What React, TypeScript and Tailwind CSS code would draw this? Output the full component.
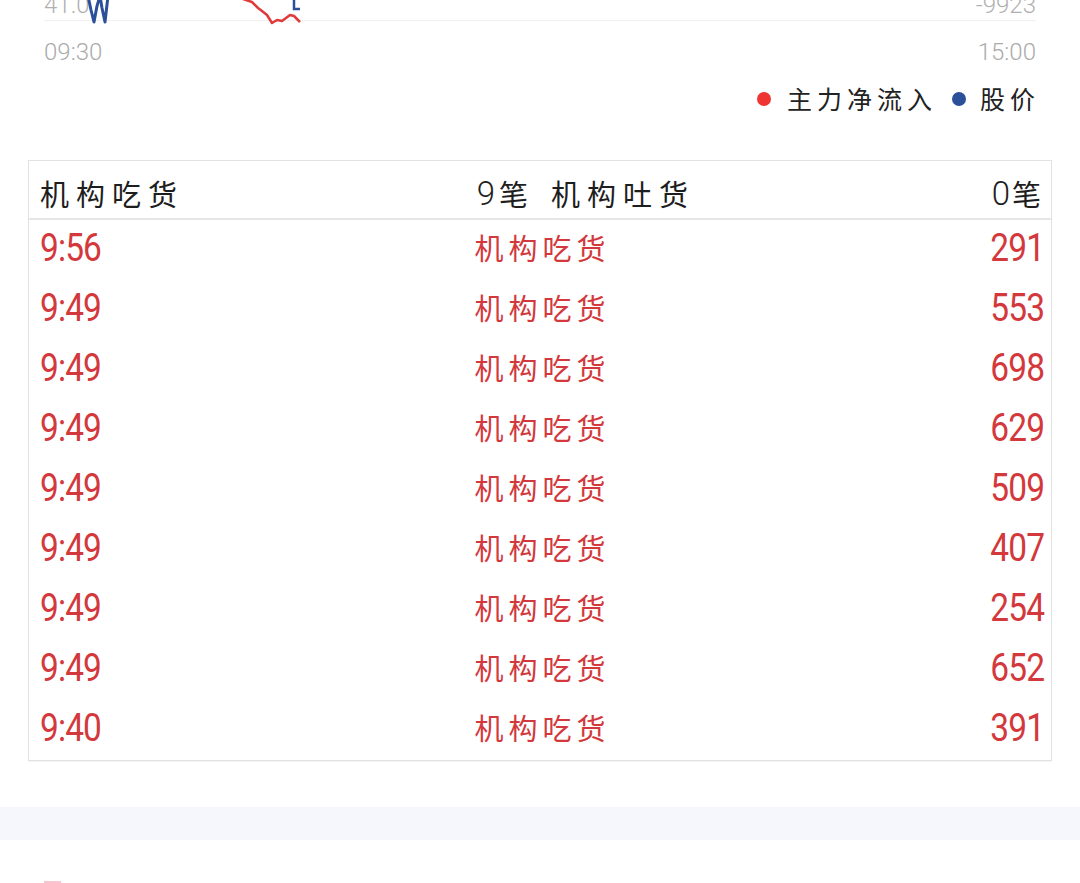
import React from "react";

const rows = [
  ["9:56", "291"],
  ["9:49", "553"],
  ["9:49", "698"],
  ["9:49", "629"],
  ["9:49", "509"],
  ["9:49", "407"],
  ["9:49", "254"],
  ["9:49", "652"],
  ["9:40", "391"],
];

const cjk = { fontFamily: '"Noto Sans CJK SC", "Noto Sans", sans-serif' };
const num = { fontFamily: 'Roboto, "Noto Sans CJK SC", sans-serif' };

export default function App() {
  return (
    <div className="w-[1080px] h-[883px] overflow-hidden bg-white relative">
      {/* chart tail */}
      <div className="relative mx-[44px] h-[21px] border-b border-[#f1f1f1]">
        <div className="flex justify-between -translate-y-[5px] text-[24px] leading-[20px] text-[#b0b0b0] font-light" style={num}>
          <span>41.0</span>
          <span>-9923</span>
        </div>
        <svg className="absolute left-0 top-0" width="992" height="26" viewBox="0 0 992 26">
          <polyline
            points="44,-4 47,10 50,22 53,6 56,-4 58,8 61,22 64,-4"
            fill="none"
            stroke="#2c4f9a"
            strokeWidth="3"
            strokeLinejoin="round"
          />
          <polyline
            points="196,-2 208,2 214,8 218,11 223,15 228,23 233,20 238,21 242,18 246,15 250,16 253,19 256,22"
            fill="none"
            stroke="#df3b3b"
            strokeWidth="2.5"
            strokeLinejoin="round"
          />
          <polyline points="250,-2 250,9 256,9" fill="none" stroke="#2c4f9a" strokeWidth="2.5" />
        </svg>
      </div>
      <div
        className="mx-[44px] mt-[19px] flex justify-between text-[24px] leading-[24px] text-[#ababab] font-light"
        style={num}
      >
        <span>09:30</span>
        <span>15:00</span>
      </div>
      {/* legend */}
      <div className="mt-[22px] pr-[40px] flex justify-end items-center h-[26px] text-[25px] text-[#222] tracking-[5px]" style={cjk}>
        <span className="w-[14px] h-[14px] rounded-full bg-[#ef3434] mr-[16px]" />
        <span>主力净流入</span>
        <span className="w-[14px] h-[14px] rounded-full bg-[#2c4f9a] ml-[15px] mr-[14px]" />
        <span>股价</span>
      </div>
      {/* table */}
      <div className="mt-[48px] mx-[28px] w-[1024px] border border-[#e2e2e2] shadow-[0_1px_1px_rgba(0,0,0,0.04)]">
        <div className="flex h-[59px] pt-[9px] border-b-2 border-[#e6e6e6] text-[29px] text-[#1e1e1e]" style={cjk}>
          <div className="w-1/2 flex items-center justify-between pl-[11px] pr-[12px]">
            <span className="tracking-[7px]">机构吃货</span>
            <span className="flex items-center">
              <span style={num} className="font-light text-[33px] mr-[4px]">9</span>
              <span>笔</span>
            </span>
          </div>
          <div className="w-1/2 flex items-center justify-between pl-[11px] pr-[10px]">
            <span className="tracking-[7px]">机构吐货</span>
            <span className="flex items-center">
              <span style={num} className="font-light text-[33px] mr-[2px]">0</span>
              <span>笔</span>
            </span>
          </div>
        </div>
        {rows.map((r, i) => (
          <div key={i} className="relative flex items-center justify-between h-[60px] pl-[11px] pr-[7px] text-[#d3393c]">
            <span className="text-[38px] leading-[44px] -mt-[4px] tracking-[-1px] scale-x-[0.88] origin-left" style={num}>
              {r[0]}
            </span>
            <span className="absolute left-1/2 -translate-x-1/2 -mt-[4px] text-[29px] tracking-[5px] pl-[5px]" style={cjk}>
              机构吃货
            </span>
            <span className="text-[38px] leading-[44px] -mt-[4px] tracking-[-1px] scale-x-[0.88] origin-right" style={num}>
              {r[1]}
            </span>
          </div>
        ))}
      </div>
      <div className="mt-[46px] h-[33px] bg-[#f6f7fc]" />
      <div className="mt-[41px] ml-[44px] w-[17px] h-[4px] bg-[#f7c6d3]" />
    </div>
  );
}
